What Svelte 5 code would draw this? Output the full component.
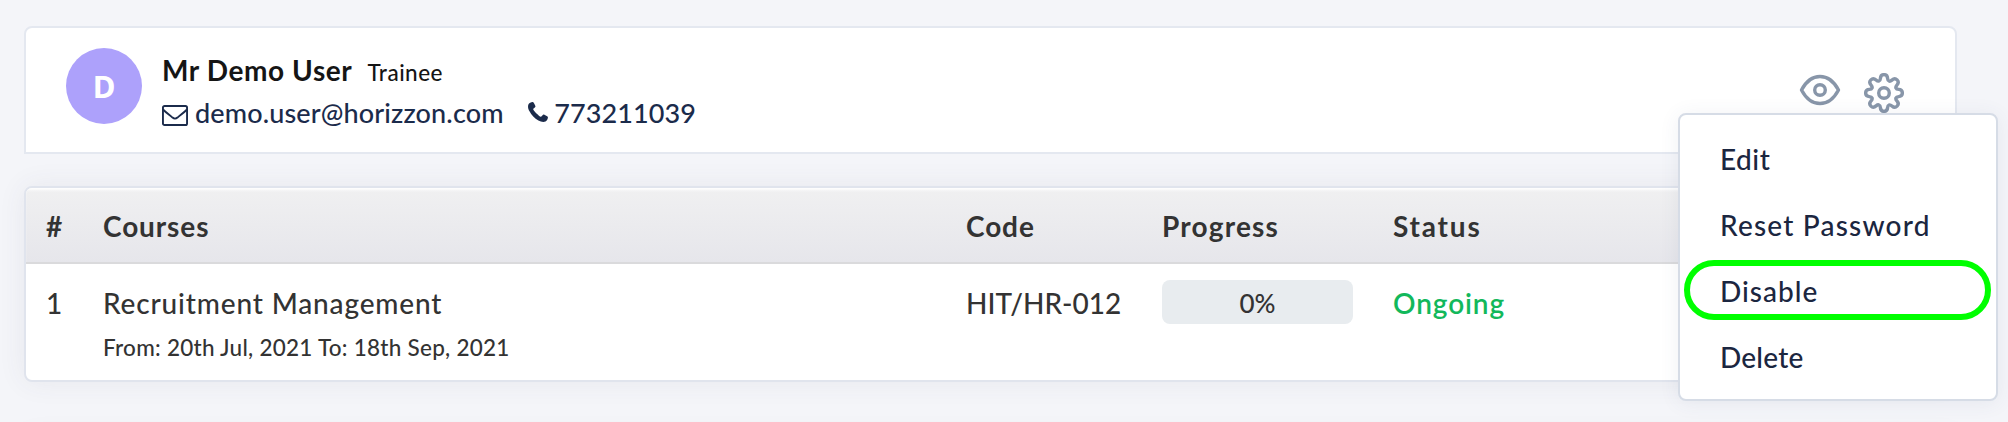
<script>
  const user = { initial: 'D', name: 'Mr Demo User', role: 'Trainee', email: 'demo.user@horizzon.com', phone: '773211039' };
  const courses = [
    { id: 1, title: 'Recruitment Management', dates: 'From: 20th Jul, 2021 To: 18th Sep, 2021', code: 'HIT/HR-012', progress: 0, status: 'Ongoing' }
  ];
  const actions = ['Edit', 'Reset Password', 'Disable', 'Delete'];
  const highlighted = 'Disable';
</script>

<main>
  <section class="profile">
    <div class="avatar">{user.initial}</div>
    <div class="info">
      <div class="line first"><strong>{user.name}</strong><span class="role">{user.role}</span></div>
      <div class="line contact">
        <svg class="mail" width="26" height="21" viewBox="0 0 26 21" fill="none" stroke="currentColor" stroke-width="1.9">
          <rect x="0.95" y="0.95" width="24.1" height="19.1" rx="1.6" />
          <path d="M1 4.5C4 7.5 7.5 10 10.5 12.6C12.2 14 13.8 14 15.5 12.6C18.5 10 22 7.5 25 4.5" />
        </svg>
        <span class="email">{user.email}</span>
        <svg class="phone" width="20" height="20" viewBox="0 0 20 20" fill="currentColor">
          <path d="M5.1.1C3.5-.1 1 1 .4 2.5C-.4 4.8.2 7.1 1.5 9.3C3.4 13 6.6 16.4 10.4 18.5C12.7 19.8 15.2 20.4 17.5 19.6C19 19 20.1 16.5 19.9 14.9C19.8 14.5 16 12.4 15.5 12.5C14.6 12.7 13.5 14.9 12.7 14.8C11.3 14.5 5.4 8.7 5.2 7.3C5.1 6.5 7.3 5.4 7.5 4.5C7.6 4 5.5.2 5.1.1Z" />
        </svg>
        <span class="number">{user.phone}</span>
      </div>
    </div>
    <div class="tools">
      <svg class="eye" width="42" height="32" viewBox="0 0 42 32" fill="none" stroke="currentColor" stroke-width="3.4">
        <path d="M2.5 16C7 7.5 13.5 2.5 21 2.5S35 7.5 39.5 16C35 24.5 28.5 29.5 21 29.5S7 24.5 2.5 16Z" stroke-linejoin="round" />
        <circle cx="21" cy="16" r="5.3" />
      </svg>
      <svg class="gear" width="40" height="40" viewBox="0 0 40 40" fill="none" stroke="currentColor" stroke-width="3.4">
        <path stroke-linejoin="round" d="M16.4 5.3C16.7 .4 23.3 .4 23.6 5.3C23.8 8.3 25.7 9 27.9 7.1C31.7 3.7 36.3 8.3 32.9 12.1C31 14.3 31.7 16.2 34.7 16.4C39.6 16.7 39.6 23.3 34.7 23.6C31.7 23.8 31 25.7 32.9 27.9C36.3 31.7 31.7 36.3 27.9 32.9C25.7 31 23.8 31.7 23.6 34.7C23.3 39.6 16.7 39.6 16.4 34.7C16.2 31.7 14.3 31 12.1 32.9C8.3 36.3 3.7 31.7 7.1 27.9C9 25.7 8.3 23.8 5.3 23.6C.4 23.3 .4 16.7 5.3 16.4C8.3 16.2 9 14.3 7.1 12.1C3.7 8.3 8.3 3.7 12.1 7.1C14.3 9 16.2 8.3 16.4 5.3Z" />
        <circle cx="20" cy="20" r="5.3" />
      </svg>
      <div class="menu">
        {#each actions as action}
          <div class="item {action.split(' ')[0].toLowerCase()}" class:marked={action === highlighted}><span>{action}</span></div>
        {/each}
      </div>
    </div>
  </section>

  <section class="courses">
    <div class="row head">
      <span>#</span><span class="h1">Courses</span><span class="h2">Code</span><span class="h3">Progress</span><span class="h4">Status</span>
    </div>
    {#each courses as course}
      <div class="row body">
        <span>{course.id}</span>
        <div><div class="title">{course.title}</div><div class="dates">{course.dates}</div></div>
        <span class="code">{course.code}</span>
        <div class="bar">{course.progress}%</div>
        <span class="status">{course.status}</span>
      </div>
    {/each}
  </section>
  <div class="next"></div>
</main>

<style>
  :global(body) { margin: 0; background: #f4f5f9; overflow: hidden; }
  main { box-sizing: border-box; height: 422px; padding: 26px 51px 0 24px; overflow: hidden; font-family: Lato, "Noto Sans", sans-serif; font-size: 28px; font-weight: 500; color: #333; white-space: nowrap; }
  .profile { box-sizing: border-box; height: 128px; display: flex; background: #fff; border: 2px solid #e4e8f0; border-radius: 8px 8px 0 0; padding: 20px 51px 0 40px; }
  .avatar { width: 76px; height: 76px; border-radius: 50%; background: #ada1fb; color: #fff; font: 700 31px/76px "Noto Sans", sans-serif; text-align: center; }
  .info { padding: 1px 0 0 20px; flex: 1; }
  .line { display: flex; height: 42px; line-height: 42px; }
  .first { color: #151515; align-items: baseline; }
  strong { font-weight: 700; letter-spacing: .6px; }
  .role { font-size: 22.5px; margin-left: 15px; letter-spacing: .5px; }
  .contact { color: #1b2b4b; font-size: 27px; align-items: center; padding-top: 1px; }
  .mail { margin: 5px 7px 0 0; }
  .phone { margin: -2px 6.5px 0 24px; }
  .email { letter-spacing: .14px; }
  .number { letter-spacing: .1px; }
  .tools { position: relative; display: flex; align-items: flex-start; gap: 23px; color: #8896a9; }
  .eye { margin-top: 26px; }
  .gear { margin-top: 25px; }
  .menu { position: absolute; z-index: 2; top: 65px; right: -94px; box-sizing: border-box; width: 320px; height: 288px; padding: 12px 4px; background: #fff; border: 2px solid #d6dce6; border-radius: 8px; box-shadow: 0 2px 20px rgba(70, 75, 110, .08); color: #1b2640; }
  .item { position: relative; height: 66px; padding-left: 36px; line-height: 64px; letter-spacing: .5px; }
  .reset { letter-spacing: 1.2px; }
  .disable { letter-spacing: 1px; }
  .delete { letter-spacing: .2px; }
  .marked::after { content: ''; position: absolute; box-sizing: border-box; left: 0; top: 1px; width: 307px; height: 60px; border: 6px solid #00ff00; border-radius: 30px; }
  .courses { box-sizing: border-box; height: 196px; margin-top: 32px; background: #fff; border: 2px solid #e0e4ed; border-radius: 8px; overflow: hidden; box-shadow: 0 0 28px rgba(65, 70, 95, .075); }
  .row { display: grid; grid-template-columns: 57px 863px 196px 231px 1fr; padding-left: 20px; }
  .head { box-sizing: border-box; height: 76px; line-height: 76px; font-weight: 700; background: linear-gradient(#f0f0f1, #e6e6eb); border-bottom: 2px solid #dadadc; box-shadow: inset 0 3px 3px -1px #fff; }
  .h1 { letter-spacing: .9px; }
  .h2 { letter-spacing: .9px; }
  .h3 { letter-spacing: 1.2px; }
  .h4 { letter-spacing: 1.8px; }
  .body { align-items: start; padding-top: 16px; line-height: 46px; }
  .title { letter-spacing: .85px; }
  .dates { font-size: 22.5px; line-height: 43px; letter-spacing: .26px; }
  .bar { width: 191px; height: 44px; border-radius: 8px; background: #e8ecef; line-height: 46px; text-align: center; font-size: 26px; }
  .status { color: #12b85b; font-weight: 600; letter-spacing: .9px; }
  .next { height: 40px; margin-top: 56px; border-radius: 8px; box-shadow: 0 0 28px rgba(65, 70, 95, .075); }
</style>
